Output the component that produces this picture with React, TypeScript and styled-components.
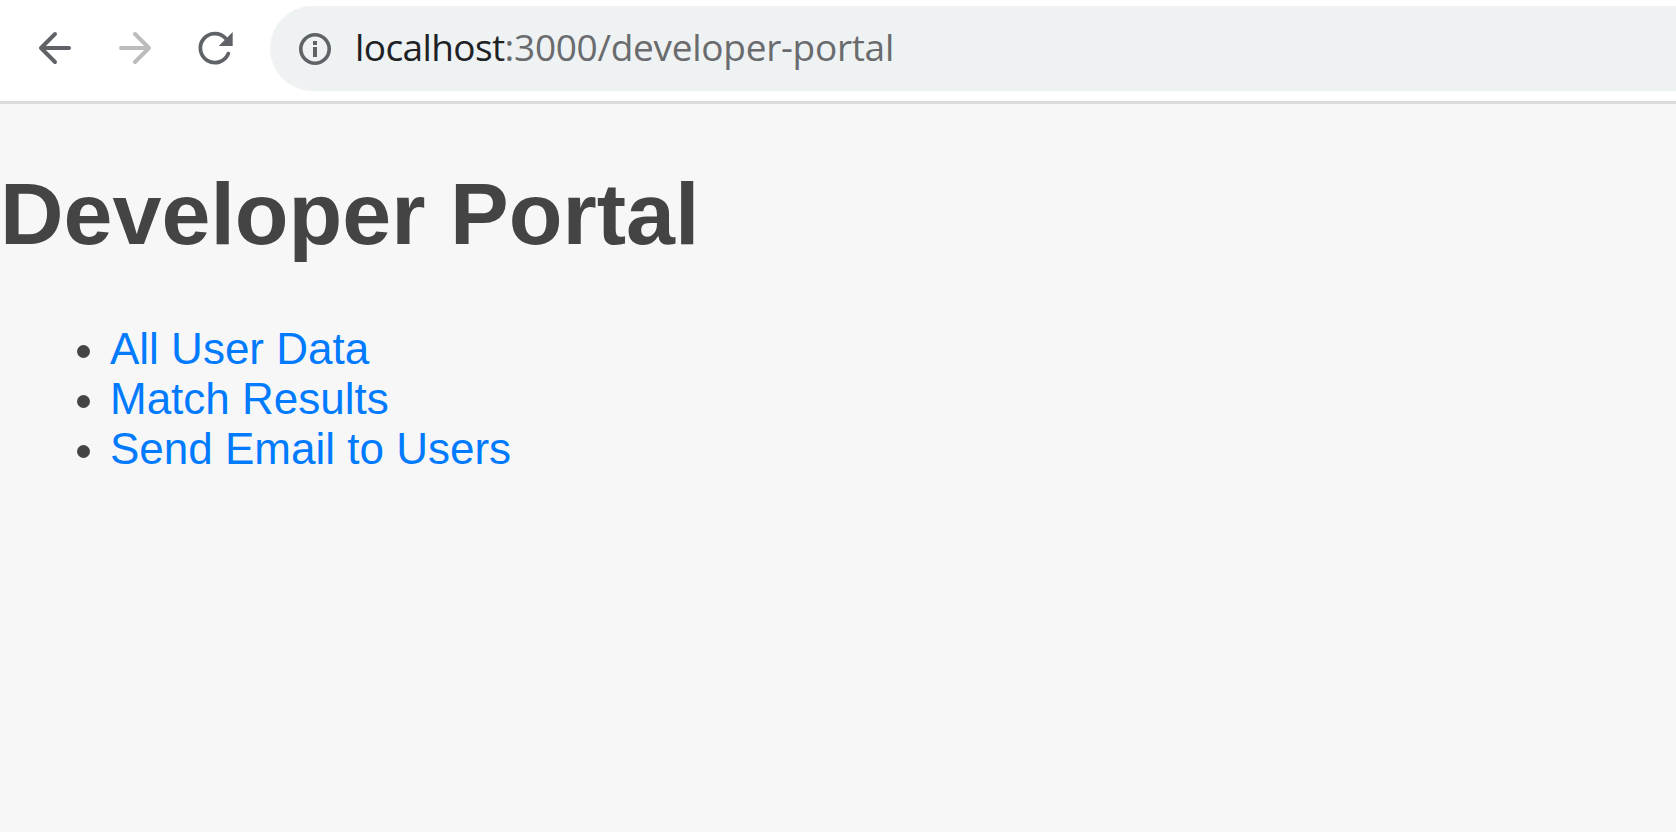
import React from "react";
import styled, { createGlobalStyle } from "styled-components";

const GlobalStyle = createGlobalStyle`
  html, body {
    margin: 0;
    background: #f7f7f7;
  }
  body {
    overflow: hidden;
    color: #444;
    font: 44px/50px "Liberation Sans", Arial, sans-serif;
  }
`;

const Screen = styled.div`
  display: flex;
  flex-direction: column;
  height: 100vh;
`;

const Toolbar = styled.header`
  display: flex;
  align-items: flex-start;
  box-sizing: border-box;
  height: 104px;
  padding: 6px 0 0 31px;
  background: #fff;
  border-bottom: 3px solid #dbdbdb;
`;

const NavButtons = styled.nav`
  display: flex;
  gap: 32px;
  width: 239px;
  padding-top: 18px;
`;

const NavButton = styled.button<{ $muted?: boolean }>`
  width: 48px;
  height: 48px;
  padding: 0;
  border: 0;
  background: none;
  color: ${(p) => (p.$muted ? "#babcbe" : "#5f6368")};

  svg {
    display: block;
  }
`;

const AddressBar = styled.div`
  display: flex;
  align-items: center;
  flex: 1;
  box-sizing: border-box;
  height: 85px;
  padding-left: 29px;
  border-radius: 42.5px 0 0 42.5px;
  background: #eef2f3;
`;

const InfoIcon = styled.svg`
  flex: none;
  width: 32px;
  height: 32px;
  margin: 1px 24px 0 0;
`;

const Url = styled.div`
  padding-bottom: 4px;
  color: #696b6d;
  font: 37px/50px "Open Sans", "Noto Sans", sans-serif;
  letter-spacing: -0.29px;
  white-space: nowrap;
`;

const Host = styled.span`
  color: #202124;
  letter-spacing: -0.6px;
`;

const Page = styled.main`
  flex: 1;
`;

const Title = styled.h1`
  margin: 59px 0 60px;
  font-size: 88px;
  line-height: 101px;
`;

const LinkList = styled.ul`
  margin: 0;
  padding: 0 0 0 77px;
  list-style: none;
`;

const LinkItem = styled.li`
  display: flex;
  align-items: center;
  gap: 20px;
  height: 50px;

  &::before {
    content: "";
    width: 13px;
    height: 13px;
    margin-top: 5px;
    border-radius: 50%;
    background: #444;
  }
`;

const PageLink = styled.a`
  color: #007bff;
  text-decoration: none;
`;

const links = [
  { label: "All User Data", href: "#users" },
  { label: "Match Results", href: "#matches" },
  { label: "Send Email to Users", href: "#email" },
];

export default function App() {
  return (
    <Screen>
      <GlobalStyle />
      <Toolbar>
        <NavButtons>
          <NavButton aria-label="Back">
            <svg width="48" height="48" fill="none" stroke="currentColor" strokeWidth="4" strokeLinecap="round" strokeLinejoin="round">
              <path d="M38 24H10.5M24 10L10 24L24 38" />
            </svg>
          </NavButton>
          <NavButton aria-label="Forward" $muted>
            <svg width="48" height="48" fill="none" stroke="currentColor" strokeWidth="4" strokeLinecap="round" strokeLinejoin="round">
              <path d="M10 24H37.5M24 10L38 24L24 38" />
            </svg>
          </NavButton>
          <NavButton aria-label="Reload">
            <svg width="48" height="48" fill="none" stroke="currentColor" strokeWidth="3.8" strokeLinecap="round">
              <path d="M37.3 29.6A14.5 14.5 0 1 1 34.5 14.3" />
              <path d="M41.7 8V22H27.7Z" fill="currentColor" stroke="none" />
            </svg>
          </NavButton>
        </NavButtons>
        <AddressBar>
          <InfoIcon viewBox="0 0 32 32">
            <circle cx="16" cy="16" r="14.2" fill="none" stroke="#5f6368" strokeWidth="3.6" />
            <path d="M14 8H18V12H14ZM14 14H18V24H14Z" fill="#5f6368" />
          </InfoIcon>
          <Url>
            <Host>localhost</Host>:3000/developer-portal
          </Url>
        </AddressBar>
      </Toolbar>
      <Page>
        <Title>Developer Portal</Title>
        <LinkList>
          {links.map((link) => (
            <LinkItem key={link.href}>
              <PageLink href={link.href}>{link.label}</PageLink>
            </LinkItem>
          ))}
        </LinkList>
      </Page>
    </Screen>
  );
}
